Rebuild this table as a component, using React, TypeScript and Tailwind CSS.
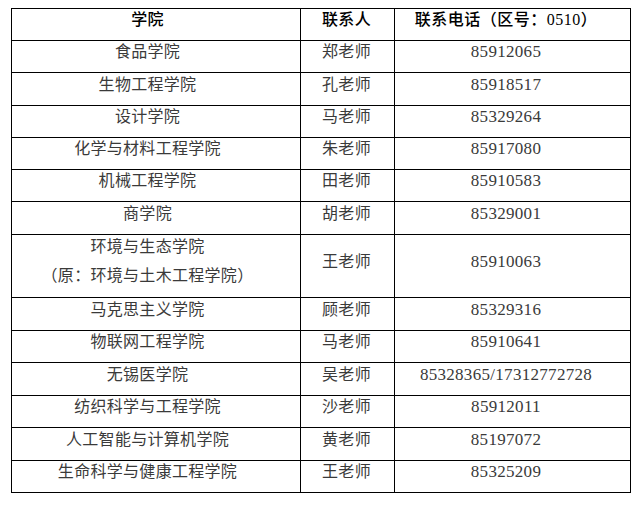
const rows: { college: string[]; contact: string; phone: string; h: string }[] = [
  { college: ["食品学院"], contact: "郑老师", phone: "85912065", h: "h-[32px]" },
  { college: ["生物工程学院"], contact: "孔老师", phone: "85918517", h: "h-[33px]" },
  { college: ["设计学院"], contact: "马老师", phone: "85329264", h: "h-[32px]" },
  { college: ["化学与材料工程学院"], contact: "朱老师", phone: "85917080", h: "h-[32px]" },
  { college: ["机械工程学院"], contact: "田老师", phone: "85910583", h: "h-[32px]" },
  { college: ["商学院"], contact: "胡老师", phone: "85329001", h: "h-[33px]" },
  {
    college: ["环境与生态学院", "（原：环境与土木工程学院）"],
    contact: "王老师",
    phone: "85910063",
    h: "h-[63px]",
  },
  { college: ["马克思主义学院"], contact: "顾老师", phone: "85329316", h: "h-[33px]" },
  { college: ["物联网工程学院"], contact: "马老师", phone: "85910641", h: "h-[32px]" },
  { college: ["无锡医学院"], contact: "吴老师", phone: "85328365/17312772728", h: "h-[33px]" },
  { college: ["纺织科学与工程学院"], contact: "沙老师", phone: "85912011", h: "h-[32px]" },
  { college: ["人工智能与计算机学院"], contact: "黄老师", phone: "85197072", h: "h-[33px]" },
  { college: ["生命科学与健康工程学院"], contact: "王老师", phone: "85325209", h: "h-[32px]" },
];

// text sits a little above the middle of each cell, as in the source document
const cell = "flex flex-col items-center justify-center pb-[9px] border-r border-b border-black";
const col1 = `${cell} w-[289px] pr-[17px] tracking-[0.3px]`;
const col2 = `${cell} w-[94px] pr-[2px] tracking-[0.3px]`;
const col3 = `${cell} w-[236px] pr-[13px] text-[17px] tracking-[0.3px]`;

export default function App() {
  return (
    <div className="w-[640px] h-[507px] bg-white pt-[8px] pl-[11px] font-['Liberation_Serif','Noto_Sans_CJK_SC',serif] text-[16px] leading-[20px]">
      <div className="w-[620px] border-l border-t border-black">
        <div className="flex h-[32px] text-black font-medium">
          <div className={col1}>学院</div>
          <div className={col2}>联系人</div>
          <div className={`${cell} w-[236px] pr-[13px] tracking-[0.5px]`}>联系电话（区号：0510）</div>
        </div>
        {rows.map((r, i) => (
          <div key={i} className={`flex ${r.h} text-[#3a3a3a]`}>
            <div className={col1}>
              {r.college.map((line, j) => (
                <div key={j} className={j > 0 ? "mt-[9px]" : ""}>
                  {line}
                </div>
              ))}
            </div>
            <div className={col2}>{r.contact}</div>
            <div className={col3}>{r.phone}</div>
          </div>
        ))}
      </div>
    </div>
  );
}
